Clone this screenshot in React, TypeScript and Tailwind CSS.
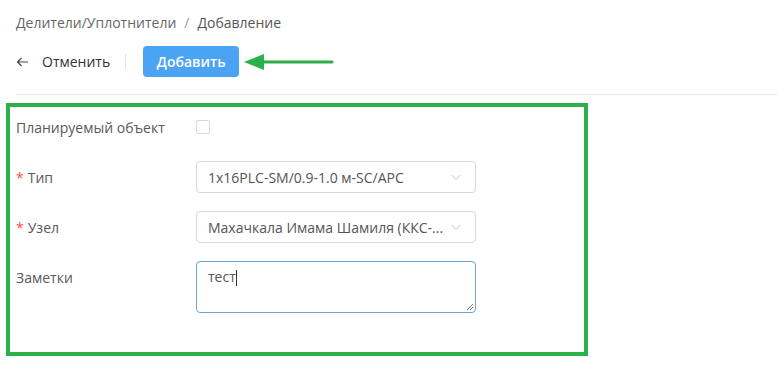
import React from "react";

function Chevron() {
  return (
    <svg width="12" height="12" viewBox="0 0 12 12" fill="none" className="text-[#c4c4c4]">
      <path d="M1.5 4 L6 8.5 L10.5 4" stroke="currentColor" strokeWidth="1" />
    </svg>
  );
}

function Label({ children, required }: { children: React.ReactNode; required?: boolean }) {
  return (
    <div className="w-[180px] shrink-0 h-[32px] flex items-center text-[14px] text-[#595959]">
      {required && <span className="text-[#ff4d4f] mr-[4px]">*</span>}
      {children}
    </div>
  );
}

export default function App() {
  return (
    <div className="w-[777px] h-[381px] bg-white relative overflow-hidden" style={{ fontFamily: '"Open Sans", "Noto Sans", sans-serif' }}>
      <div className="pl-[16px] pt-[12px] h-[32px] flex items-center text-[14px] text-[#666]">
        <span>Делители/Уплотнители</span>
        <span className="mx-[8px] text-[#999]">/</span>
        <span className="text-[#555]">Добавление</span>
      </div>
      <div className="pl-[16px] mt-[14px] h-[31px] flex items-center">
        <div className="flex items-center text-[14px] text-[#333]">
          <svg width="13" height="10" viewBox="0 0 13 10" fill="none" className="mr-[13px]">
            <path d="M12 5 H1.5 M5.5 1 L1.5 5 L5.5 9" stroke="#444" strokeWidth="1.2" />
          </svg>
          <span>Отменить</span>
        </div>
        <div className="w-px h-[15px] bg-[#e5e5e5] ml-[15px] mr-[17px]" />
        <div className="w-[96px] h-[31px] rounded-[4px] bg-[#4aa3f3] text-white text-[14px] font-semibold flex items-center justify-center">
          Добавить
        </div>
      </div>
      <div className="ml-[16px] mt-[17px] h-px bg-[#e8e8e8]" />
      <div className="ml-[6px] mt-[8px] w-[582px] h-[253px] border-[4px] border-[#2bb04a] pl-[6px] pt-[4px] flex flex-col gap-[18px]">
        <div className="flex items-center">
          <Label>Планируемый объект</Label>
          <div className="w-[14px] h-[14px] border border-[#d9d9d9] rounded-[2px] bg-white" />
        </div>
        <div className="flex items-center">
          <Label required>Тип</Label>
          <div className="w-[280px] h-[32px] border border-[#d9d9d9] rounded-[4px] flex items-center justify-between pl-[11px] pr-[13px] text-[14px] text-[#555]">
            <span>1x16PLC-SM/0.9-1.0 м-SC/APC</span>
            <Chevron />
          </div>
        </div>
        <div className="flex items-center">
          <Label required>Узел</Label>
          <div className="w-[280px] h-[32px] border border-[#d9d9d9] rounded-[4px] flex items-center justify-between pl-[11px] pr-[13px] text-[14px] text-[#555]">
            <span className="whitespace-nowrap">Махачкала Имама Шамиля (ККС-...</span>
            <Chevron />
          </div>
        </div>
        <div className="flex items-start">
          <Label>Заметки</Label>
          <div className="relative w-[280px] h-[52px] border border-[#6aa6d6] rounded-[4px] pl-[11px] pt-[4px] text-[14px] text-[#555]">
            <span>тест</span>
            <span className="inline-block w-px h-[16px] bg-[#333] align-middle" />
            <svg width="8" height="8" viewBox="0 0 8 8" className="absolute right-[1px] bottom-[1px]">
              <path d="M7 1 L1 7 M7 4 L4 7" stroke="#777" strokeWidth="1" />
            </svg>
          </div>
        </div>
      </div>
      <svg width="92" height="20" viewBox="0 0 92 20" className="absolute left-[242px] top-[52px]">
        <path d="M2 10 L22 2 L22 18 Z" fill="#2bb04a" />
        <path d="M20 10 H90" stroke="#2bb04a" strokeWidth="3" strokeLinecap="round" />
      </svg>
    </div>
  );
}
